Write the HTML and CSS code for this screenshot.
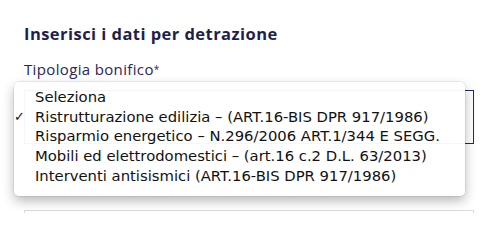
FILE: index.html
```html
<!DOCTYPE html>
<html lang="it">
<head>
<meta charset="utf-8">
<title>Detrazione</title>
<link rel="stylesheet" href="styles.css">
</head>
<body>
<div class="page">
  <h2 class="title">Inserisci i dati per detrazione</h2>
  <div class="field">
    <label class="label">Tipologia bonifico<span class="req">*</span></label>
    <div class="select">
      <svg class="chev" width="10" height="6" viewBox="0 0 10 6"><path d="M1 1 L5 5 L9 1" fill="none" stroke="#c8c8c8" stroke-width="1.4"/></svg>
    </div>
  </div>
  <div class="input"></div>
</div>
<ul class="menu">
  <li class="opt">Seleziona</li>
  <li class="opt checked">Ristrutturazione edilizia – (ART.16-BIS DPR 917/1986)</li>
  <li class="opt">Risparmio energetico – N.296/2006 ART.1/344 E SEGG.</li>
  <li class="opt">Mobili ed elettrodomestici – (art.16 c.2 D.L. 63/2013)</li>
  <li class="opt">Interventi antisismici (ART.16-BIS DPR 917/1986)</li>
</ul>
</body>
</html>
```
FILE: styles.css
```css
html, body {
  margin: 0;
  padding: 0;
  background: #fff;
  height: 213px;
  overflow: hidden;
}
.page {
  padding: 23px 25px 0 24px;
  font-family: "Open Sans", "Liberation Sans", sans-serif;
}
.title {
  margin: 0;
  font-size: 16.5px;
  line-height: 22px;
  font-weight: 700;
  color: #1e1f4b;
  letter-spacing: 0.45px;
}
.field {
  margin-top: 14px;
}
.label {
  display: block;
  font-size: 15px;
  line-height: 20px;
  color: #2c2456;
  letter-spacing: 0.35px;
}
.req {
  font-size: 10px;
  vertical-align: top;
}
.select {
  margin-top: 11px;
  height: 52px;
  border: 1px solid #1b2d62;
  display: flex;
  align-items: center;
  justify-content: flex-end;
  padding: 0 12px 0 14px;
}
.input {
  margin-top: 66px;
  height: 40px;
  border: 1px solid #dcdcdc;
}
.menu {
  position: absolute;
  left: 14px;
  top: 82px;
  width: 451px;
  height: 114px;
  box-sizing: border-box;
  margin: 0;
  padding: 5px 0 0 0;
  list-style: none;
  background: rgba(255, 255, 255, 0.96);
  border-radius: 5px;
  box-shadow: 0 0 0 0.5px rgba(0,0,0,0.12), 0 5px 12px rgba(0,0,0,0.28);
  font-family: "DejaVu Sans", "Liberation Sans", sans-serif;
  font-size: 14.8px;
  color: #111;
}
.opt {
  position: relative;
  height: 19.7px;
  line-height: 19.7px;
  padding-left: 21px;
  white-space: nowrap;
}
.checked::before {
  content: "✓";
  position: absolute;
  left: 0;
  top: 0;
  font-size: 13px;
}
```
